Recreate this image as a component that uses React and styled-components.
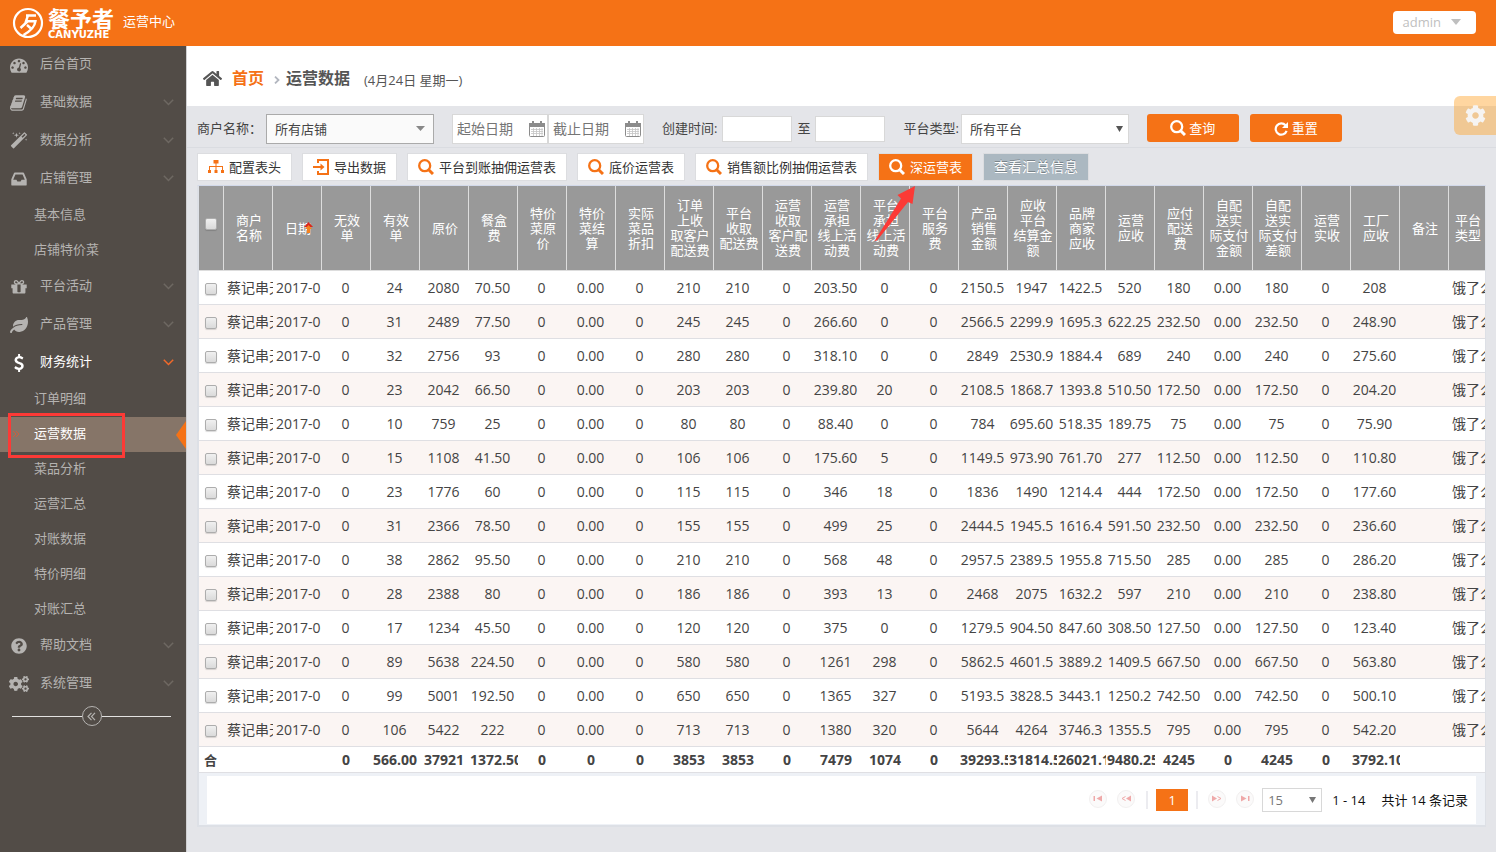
import React from "react";
import styled, { createGlobalStyle, css } from "styled-components";
import { FaLeaf, FaQuestionCircle, FaCogs, FaCog, FaHome } from "react-icons/fa";

const orange = "#f57216";

const GlobalStyle = createGlobalStyle`
  *, *::before, *::after { box-sizing: border-box; }
  body {
    margin: 0;
    background: #e4e5e9;
    color: #444;
    font-family: "Open Sans", "Noto Sans CJK SC", sans-serif;
    font-size: 13px;
    line-height: 20px;
  }
  button, input, select { font: inherit; color: inherit; margin: 0; }
  a { color: inherit; text-decoration: none; }
  ul, ol { list-style: none; margin: 0; padding: 0; }
`;

const Page = styled.div`
  min-height: 100vh;
  display: flex;
  flex-direction: column;
`;

const TopBar = styled.header`
  height: 46px;
  flex: none;
  display: flex;
  align-items: center;
  justify-content: space-between;
  padding: 0 20px 0 12px;
  background: ${orange};
  color: #fff;
`;

const Brand = styled.a`
  display: flex;
  align-items: center;
`;

const BrandWords = styled.span`
  display: flex;
  flex-direction: column;
  margin: 0 9px 0 4px;
`;

const BrandName = styled.strong`
  font-size: 22px;
  line-height: 24px;
  font-weight: 700;
`;

const BrandLatin = styled.small`
  font: 700 10px/10px "DejaVu Sans", sans-serif;
`;

const BrandSection = styled.span`
  padding-bottom: 4px;
`;

const UserButton = styled.button`
  display: flex;
  align-items: center;
  gap: 10px;
  height: 23px;
  margin-bottom: 2px;
  padding: 0 15px 0 10px;
  border: 0;
  border-radius: 4px;
  background: #fff;
  color: #bfbfbf;
`;

const Body = styled.div`
  flex: 1;
  display: flex;
`;

const Sidebar = styled.nav`
  flex: none;
  width: 187px;
  border-right: 1px solid #d0d0d2;
  background: #524c47;
  color: #b5b3b1;
`;

const MenuLink = styled.a`
  display: flex;
  align-items: center;
  height: 38px;
  padding: 0 12px 4px 9px;
  color: ${(p) => (p.$open ? "#fff" : "inherit")};
  > svg { margin-top: 3px; }
`;

const MenuIcon = styled.span`
  display: flex;
  justify-content: center;
  width: 20px;
  margin-right: 11px;
  padding-top: 4px;
`;

const MenuText = styled.span`
  flex: 1;
`;

const SubLink = styled.a`
  position: relative;
  display: flex;
  align-items: center;
  height: 35px;
  padding: 0 0 3px 34px;
  ${(p) =>
    p.$active &&
    css`
      background: #867568;
      color: #fff;
    `}
`;

const ActiveMark = styled.svg`
  position: absolute;
  left: 12px;
  top: 13px;
`;

const ActiveNotch = styled.svg`
  position: absolute;
  right: 0;
  top: 4px;
`;

const Highlight = styled.span`
  position: absolute;
  left: 8px;
  top: -4px;
  width: 117px;
  height: 45px;
  border: 3px solid #fc3a36;
  pointer-events: none;
`;

const CollapseRow = styled.div`
  display: flex;
  align-items: center;
  margin: 3px 15px 0 12px;
  &::before, &::after { content: ""; flex: 1; height: 1px; background: #e3e2e1; }
`;

const CollapseButton = styled.button`
  display: flex;
  align-items: center;
  justify-content: center;
  width: 20px;
  height: 20px;
  padding: 0;
  border: 1px solid #b5b3b1;
  border-radius: 50%;
  background: none;
`;

const Main = styled.main`
  flex: 1;
  min-width: 0;
`;

const Crumbs = styled.div`
  display: flex;
  align-items: center;
  height: 60px;
  padding: 4px 16px 0;
  background: #fff;
  color: #555;
`;

const CrumbLink = styled.a`
  margin-left: 10px;
  font-size: 16px;
  font-weight: 700;
  color: ${orange};
`;

const CrumbCurrent = styled.span`
  font-size: 16px;
  font-weight: 700;
`;

const CrumbSep = styled.svg`
  margin: 4px 6px 0 10px;
`;

const CrumbDate = styled.span`
  margin: 3px 0 0 14px;
`;

const Filters = styled.form`
  display: flex;
  flex-wrap: wrap;
  align-items: center;
  gap: 4px 18px;
  min-height: 42px;
  padding: 5px 10px 0;
  border-bottom: 1px solid #dadce1;
`;

const Field = styled.div`
  display: flex;
  align-items: center;
  gap: ${(p) => p.$gap || 0}px;
`;

const FieldLabel = styled.label`
  padding-bottom: 3px;
`;

const SelectBox = styled.span`
  position: relative;
  display: flex;
  width: ${(p) => p.$width}px;
  height: ${(p) => p.$height || 30}px;
  > svg { position: absolute; right: ${(p) => p.$inset || 6}px; top: 50%; margin-top: -3px; pointer-events: none; }
`;

const Select = styled.select`
  appearance: none;
  width: 100%;
  padding: 0 20px 0 ${(p) => p.$pad || 8}px;
  border: 1px solid ${(p) => (p.$strong ? "#aaa" : "#d8d8d8")};
  border-radius: 0;
  background: ${(p) => (p.$strong ? "#fafafa" : "#fff")};
  color: ${(p) => p.$color || "#444"};
`;

const DateBox = styled.label`
  display: flex;
  align-items: center;
  width: 96px;
  height: 30px;
  padding: 0 2px 0 4px;
  border: 1px solid #d8d8d8;
  background: #fff;
`;

const DateInput = styled.input`
  flex: 1;
  min-width: 0;
  padding: 0;
  border: 0;
  outline: 0;
  background: none;
  font-size: 14px;
  &::placeholder { color: #757575; }
`;

const TimeInput = styled.input`
  width: 70px;
  height: 26px;
  padding: 0 4px;
  border: 1px solid #d8d8d8;
  background: #fff;
`;

const ActionButton = styled.button`
  display: flex;
  align-items: center;
  justify-content: center;
  gap: 3px;
  width: 92px;
  height: 28px;
  margin-bottom: 2px;
  border: 0;
  border-radius: 3px;
  background: ${orange};
  color: #fff;
`;

const Toolbar = styled.div`
  display: flex;
  flex-wrap: wrap;
  gap: 4px 10px;
  padding: 5px 10px 4px;
`;

const ToolButton = styled.button`
  position: relative;
  display: flex;
  align-items: center;
  gap: 5px;
  height: 28px;
  padding: 0 10px;
  border: 1px solid #dcdde0;
  background: #fff;
  color: #333;
  > svg:first-child { color: ${orange}; }
  ${(p) =>
    p.$primary &&
    css`
      background: ${orange};
      color: #fff;
      > svg:first-child { color: #fff; }
    `}
  ${(p) =>
    p.$muted &&
    css`
      background: #abb8c1;
      color: #fff;
      font-size: 14px;
      text-shadow: 0 -1px 0 rgba(0, 0, 0, 0.3);
    `}
`;

const PointerArrow = styled.svg`
  position: absolute;
  left: -6px;
  top: 31px;
  z-index: 2;
  pointer-events: none;
`;

const Panel = styled.section`
  margin: 0 10px 25px;
  border: solid #dde0e6;
  border-width: 1px 1px 2px 2px;
  border-top-color: #d2d9ea;
  background: #eef1f6;
`;

const TableClip = styled.div`
  overflow: hidden;
`;

const Table = styled.table`
  width: 100%;
  table-layout: fixed;
  border-collapse: separate;
  border-spacing: 0;
  background: #fff;
`;

const CheckCol = styled.col`
  width: 25px;
`;

const DataCol = styled.col`
  width: 49px;
`;

const HeadCell = styled.th`
  position: relative;
  height: 85px;
  padding: 0 0 0 2px;
  border: solid #ddd;
  border-width: 0 1px 1px 0;
  background: #999;
  color: #fff;
  font-weight: 400;
  line-height: 15px;
  white-space: pre;
  &:first-child { padding: 0 0 10px; }
  &:last-child { border-right: 0; }
`;

const SortMark = styled.svg`
  position: absolute;
  right: 8px;
  top: 36px;
`;

const Row = styled.tr`
  background: #fff;
  &:nth-child(even) { background: #fbf5f3; }
`;

const Cell = styled.td`
  height: 34px;
  padding: 0 3px 0 1px;
  overflow: hidden;
  border-bottom: 1px solid #dfdfe3;
  font-size: 14px;
  text-align: center;
  white-space: nowrap;
`;

const TextCell = styled(Cell)`
  padding: 0 0 0 3px;
  text-align: left;
`;

const SumCell = styled(Cell)`
  height: 26px;
  padding: 0 2px 0 1px;
  font-weight: 700;
`;

const SumLabel = styled(SumCell)`
  padding: 0 2px 0 0;
  font-size: 13px;
`;

const Check = styled.input.attrs({ type: "checkbox" })`
  appearance: none;
  display: block;
  width: 12px;
  height: 12px;
  margin: 2px auto 0;
  border: 1px solid #adadad;
  border-radius: 2px;
  background: linear-gradient(#f0f0f0, #dadada);
  box-shadow: 0 1px 1px rgba(0, 0, 0, 0.15);
`;

const Pager = styled.div`
  display: flex;
  align-items: center;
  justify-content: flex-end;
  height: 48px;
  margin: 3px 9px 1px 8px;
  padding: 0 8px;
  background: #fff;
  color: #111;
`;

const PagerButton = styled.button`
  display: flex;
  align-items: center;
  justify-content: center;
  width: 18px;
  height: 18px;
  margin: 0 5px 2px;
  padding: 0 0 1px;
  border: 1px solid #f2f0f0;
  border-radius: 50%;
  background: #fbfafa;
`;

const PagerLine = styled.span`
  width: 2px;
  height: 18px;
  margin: ${(p) => (p.$after ? "0 5px 0 8px" : "0 8px 0 6px")};
  background: #ececf0;
`;

const PageNumber = styled.button`
  width: 32px;
  height: 22px;
  padding: 0;
  border: 0;
  background: ${orange};
  color: #fff;
`;

const PagerText = styled.span`
  margin-left: ${(p) => p.$gap}px;
`;

const PageSize = styled.span`
  display: flex;
  margin-left: 3px;
`;

const Settings = styled.button`
  position: fixed;
  right: 0;
  top: 96px;
  z-index: 3;
  display: flex;
  align-items: center;
  justify-content: center;
  width: 42px;
  height: 39px;
  padding: 0;
  border: 0;
  border-radius: 6px 0 0 6px;
  background: rgba(255, 165, 45, 0.45);
  color: #f6f4f2;
`;

const Fa4 = ({ d, size = 18 }) => (
  <svg width={size} height={size} viewBox="0 0 1792 1792" fill="currentColor" aria-hidden="true">
    <path d={d} />
  </svg>
);

const dashboardPath =
  "M384 1152q0-53-37.5-90.5t-90.5-37.5-90.5 37.5-37.5 90.5 37.5 90.5 90.5 37.5 90.5-37.5 37.5-90.5zm192-448q0-53-37.5-90.5t-90.5-37.5-90.5 37.5-37.5 90.5 37.5 90.5 90.5 37.5 90.5-37.5 37.5-90.5zm428 481l101-382q6-26-7.5-48.5t-38.5-29.5-48 6.5-30 39.5l-101 382q-60 5-107 43.5t-63 98.5q-20 77 20 146t117 89 146-20 89-117q16-60-6-117t-72-91zm660-33q0-53-37.5-90.5t-90.5-37.5-90.5 37.5-37.5 90.5 37.5 90.5 90.5 37.5 90.5-37.5 37.5-90.5zm-640-640q0-53-37.5-90.5t-90.5-37.5-90.5 37.5-37.5 90.5 37.5 90.5 90.5 37.5 90.5-37.5 37.5-90.5zm448 192q0-53-37.5-90.5t-90.5-37.5-90.5 37.5-37.5 90.5 37.5 90.5 90.5 37.5 90.5-37.5 37.5-90.5zm320 448q0 261-141 483-19 29-54 29h-1402q-35 0-54-29-141-221-141-483 0-182 71-348t191-286 286-191 348-71 348 71 286 191 191 286 71 348z";
const bookPath =
  "M1639 478q40 57 18 129l-275 906q-19 64-76.5 107.5t-122.5 43.5h-923q-77 0-148.5-53.5t-99.5-131.5q-24-67-2-127 0-4 3-27t4-37q1-8-3-21.5t-3-19.5q2-11 8-21t16.5-23.5 16.5-23.5q23-38 45-91.5t30-91.5q3-10 .5-30t-.5-28q3-11 17-28t17-23q21-36 42-92t25-90q1-9-2.5-32t.5-28q4-13 22-30.5t22-22.5q19-26 42.5-84.5t27.5-96.5q1-8-3-25.5t-2-26.5q2-8 9-18t18-23 17-21q8-12 16.5-30.5t15-35 16-36 19.5-32 26.5-23.5 36-11.5 47.5 5.5l-1 3q38-9 51-9h761q74 0 114 56t18 130l-274 906q-36 119-71.5 153.5t-128.5 34.5h-869q-27 0-38 15-11 16-1 43 24 70 144 70h923q29 0 56-15.5t35-41.5l300-987q7-22 5-57 38 15 59 43zm-1064 2q-4 13 2 22.5t20 9.5h608q13 0 25.5-9.5t16.5-22.5l21-64q4-13-2-22.5t-20-9.5h-608q-13 0-25.5 9.5t-16.5 22.5zm-83 256q-4 13 2 22.5t20 9.5h608q13 0 25.5-9.5t16.5-22.5l21-64q4-13-2-22.5t-20-9.5h-608q-13 0-25.5 9.5t-16.5 22.5z";
const magicPath =
  "M1254 581l293-293-107-107-293 293zm447-293q0 27-18 45l-1286 1286q-18 18-45 18t-45-18l-198-198q-18-18-18-45t18-45l1286-1286q18-18 45-18t45 18l198 198q18 18 18 45zm-1351-190l98 30-98 30-30 98-30-98-98-30 98-30 30-98zm350 162l196 60-196 60-60 196-60-196-196-60 196-60 60-196zm930 478l98 30-98 30-30 98-30-98-98-30 98-30 30-98zm-640-640l98 30-98 30-30 98-30-98-98-30 98-30 30-98z";
const inboxPath =
  "M1151 960h316q-1-3-2.5-8.5t-2.5-7.5l-212-496h-708l-212 496q-1 3-2.5 8.5t-2.5 7.5h316l95 192h320zm513 30v482q0 26-19 45t-45 19h-1408q-26 0-45-19t-19-45v-482q0-62 25-123l238-552q10-25 36.5-42t52.5-17h832q26 0 52.5 17t36.5 42l238 552q25 61 25 123z";
const giftPath =
  "M1056 1356v-716h-320v716q0 25 18 38.5t46 13.5h192q28 0 46-13.5t18-38.5zm-456-844h195l-126-161q-26-31-69-31-40 0-68 28t-28 68 28 68 68 28zm688-96q0-40-28-68t-68-28q-43 0-69 31l-125 161h194q40 0 68-28t28-68zm376 256v320q0 14-9 23t-23 9h-96v416q0 40-28 68t-68 28h-1088q-40 0-68-28t-28-68v-416h-96q-14 0-23-9t-9-23v-320q0-14 9-23t23-9h440q-93 0-158.5-65.5t-65.5-158.5 65.5-158.5 158.5-65.5q107 0 168 77l128 165 128-165q61-77 168-77 93 0 158.5 65.5t65.5 158.5-65.5 158.5-158.5 65.5h440q14 0 23 9t9 23z";
const dollarPath =
  "M1362 1185q0 153-99.5 263.5t-258.5 136.5v175q0 14-9 23t-23 9h-135q-13 0-22.5-9.5t-9.5-22.5v-175q-66-9-127.5-31t-101.5-44.5-74-48-46.5-37.5-17.5-18q-17-21-2-41l103-135q7-10 23-12 15-2 24 9l2 2q113 99 243 125 37 8 74 8 81 0 142.5-43t61.5-122q0-28-15-53t-33.5-42-58.5-37.5-66-32-80-32.5q-39-16-61.5-25t-61.5-26.5-62.5-31-56.5-35.5-53.5-42.5-43.5-49-35.5-58-21-66.5-8.5-78q0-138 98-242t255-134v-180q0-13 9.5-22.5t22.5-9.5h135q14 0 23 9t9 23v176q57 6 110.5 23t87 33.5 63.5 37.5 39 29 15 14q17 18 5 38l-81 146q-8 15-23 16-14 3-27-7-3-3-14.5-12t-39-26.5-58.5-32-74.5-26-85.5-11.5q-95 0-155 43t-60 111q0 26 8.5 48t29.5 41.5 39.5 33 56 31 60.5 27 70 27.5q53 20 81 31.5t76 35 75.5 42.5 62 50 53 63.5 31.5 76.5 13 94z";

const LogoMark = () => (
  <svg width="32" height="32" viewBox="0 0 32 32" fill="none" stroke="#fff" aria-hidden="true">
    <circle cx="16" cy="16" r="14" strokeWidth="2.2" />
    <path d="M14 8.500H24M16 8.500L14 14.200H23.500Q22.500 22 11.500 28M15.500 14.500L8.500 21M15 18l4.500 4" strokeWidth="2.400" />
  </svg>
);

const Chevron = ({ color = "#6e6862" }) => (
  <svg width="11" height="7" viewBox="0 0 11 7" fill="none" stroke={color} strokeWidth="1.5" aria-hidden="true">
    <path d="M.8.8l4.700 4.700L10.200.8" />
  </svg>
);

const Caret = ({ w = 9, h = 5, color = "#888" }) => (
  <svg width={w} height={h} viewBox="0 0 10 6" preserveAspectRatio="none" fill={color} aria-hidden="true">
    <path d="M0 0h10L5 6z" />
  </svg>
);

const SearchIcon = () => (
  <svg width="16" height="16" viewBox="0 0 16 16" fill="none" stroke="currentColor" aria-hidden="true">
    <circle cx="6.700" cy="6.700" r="5.500" strokeWidth="2.300" />
    <path d="M10.700 10.700L15 15" strokeWidth="3" />
  </svg>
);

const SitemapIcon = () => (
  <svg width="16" height="16" viewBox="0 0 16 16" fill="currentColor" aria-hidden="true">
    <path d="M5.500 1h5v3.500H8.500V7H15v4h1v3h-3v-3h1V8H8.500v3h1v3h-3v-3h1V8H2v3h1v3H0v-3h1V7h6.500V4.500h-2z" />
  </svg>
);

const ExportIcon = () => (
  <svg width="16" height="16" viewBox="0 0 16 16" fill="none" stroke="currentColor" strokeWidth="2" aria-hidden="true">
    <path d="M5 4V1h10v14H5v-3M0 8h9" />
    <path d="M7.500 4.500L11.500 8l-4 3.500z" fill="currentColor" stroke="none" />
  </svg>
);

const RepeatIcon = () => (
  <svg width="15" height="15" viewBox="0 0 15 15" fill="none" stroke="currentColor" strokeWidth="2.200" aria-hidden="true">
    <path d="M11.500 4.300A5.600 5.600 0 1 0 12.600 9.800" />
    <path d="M14 1V7H8z" fill="currentColor" stroke="none" />
  </svg>
);

const CalendarIcon = () => (
  <svg width="16" height="16" viewBox="0 0 16 16" aria-hidden="true">
    <rect x=".5" y="2.500" width="15" height="13" rx="1" fill="#fff" stroke="#8c8c8c" />
    <path d="M0 2h16v4H0zM3 0h2v3H3zM11 0h2v3h-2z" fill="#8c8c8c" />
    <path d="M2 8.500h12M2 10.500h12M2 12.500h12M4.500 7v8M7.500 7v8M10.500 7v8M13 7v8" stroke="#c4c4c4" strokeWidth=".8" />
  </svg>
);

const pagerShapes = {
  first: <path d="M.5 2h1.500v5H.5zM9 1.500v6L3.500 4.500z" />,
  prev: (
    <>
      <path d="M10 1.500v6L5 4.500z" />
      <path d="M4.500 2.500L1 4.500l3.500 2" fill="none" stroke="#efa9a9" />
    </>
  ),
  next: (
    <>
      <path d="M0 1.500v6l5-3z" />
      <path d="M5.500 2.500L9 4.500l-3.500 2" fill="none" stroke="#efa9a9" />
    </>
  ),
  last: <path d="M8 2h1.500v5H8zM1 1.500v6l5.500-3z" />,
};

const PagerIcon = ({ kind }) => (
  <svg width="10" height="9" viewBox="0 0 10 9" fill="#efa9a9" aria-hidden="true">
    {pagerShapes[kind]}
  </svg>
);

const menu = [
  { label: "后台首页", icon: <Fa4 d={dashboardPath} />, leaf: true },
  { label: "基础数据", icon: <Fa4 d={bookPath} /> },
  { label: "数据分析", icon: <Fa4 d={magicPath} /> },
  { label: "店铺管理", icon: <Fa4 d={inboxPath} />, items: ["基本信息", "店铺特价菜"] },
  { label: "平台活动", icon: <Fa4 d={giftPath} /> },
  { label: "产品管理", icon: <FaLeaf size={18} /> },
  {
    label: "财务统计",
    icon: <Fa4 d={dollarPath} />,
    open: true,
    items: ["订单明细", "运营数据", "菜品分析", "运营汇总", "对账数据", "特价明细", "对账汇总"],
  },
  { label: "帮助文档", icon: <FaQuestionCircle size={16} /> },
  { label: "系统管理", icon: <FaCogs size={20} /> },
];

const columns = [
  "商户\n名称", "日期", "无效\n单", "有效\n单", "原价", "餐盒\n费", "特价\n菜原\n价", "特价\n菜结\n算",
  "实际\n菜品\n折扣", "订单\n上收\n取客户\n配送费", "平台\n收取\n配送费", "运营\n收取\n客户配\n送费",
  "运营\n承担\n线上活\n动费", "平台\n承担\n线上活\n动费", "平台\n服务\n费", "产品\n销售\n金额",
  "应收\n平台\n结算金\n额", "品牌\n商家\n应收", "运营\n应收", "应付\n配送\n费", "自配\n送实\n际支付\n金额",
  "自配\n送实\n际支付\n差额", "运营\n实收", "工厂\n应收", "备注", "平台\n类型",
];

const rows = [
  "0 24 2080 70.50 0 0.00 0 210 210 0 203.50 0 0 2150.5 1947 1422.5 520 180 0.00 180 0 208",
  "0 31 2489 77.50 0 0.00 0 245 245 0 266.60 0 0 2566.5 2299.9 1695.3 622.25 232.50 0.00 232.50 0 248.90",
  "0 32 2756 93 0 0.00 0 280 280 0 318.10 0 0 2849 2530.9 1884.4 689 240 0.00 240 0 275.60",
  "0 23 2042 66.50 0 0.00 0 203 203 0 239.80 20 0 2108.5 1868.7 1393.8 510.50 172.50 0.00 172.50 0 204.20",
  "0 10 759 25 0 0.00 0 80 80 0 88.40 0 0 784 695.60 518.35 189.75 75 0.00 75 0 75.90",
  "0 15 1108 41.50 0 0.00 0 106 106 0 175.60 5 0 1149.5 973.90 761.70 277 112.50 0.00 112.50 0 110.80",
  "0 23 1776 60 0 0.00 0 115 115 0 346 18 0 1836 1490 1214.4 444 172.50 0.00 172.50 0 177.60",
  "0 31 2366 78.50 0 0.00 0 155 155 0 499 25 0 2444.5 1945.5 1616.4 591.50 232.50 0.00 232.50 0 236.60",
  "0 38 2862 95.50 0 0.00 0 210 210 0 568 48 0 2957.5 2389.5 1955.8 715.50 285 0.00 285 0 286.20",
  "0 28 2388 80 0 0.00 0 186 186 0 393 13 0 2468 2075 1632.2 597 210 0.00 210 0 238.80",
  "0 17 1234 45.50 0 0.00 0 120 120 0 375 0 0 1279.5 904.50 847.60 308.50 127.50 0.00 127.50 0 123.40",
  "0 89 5638 224.50 0 0.00 0 580 580 0 1261 298 0 5862.5 4601.5 3889.2 1409.5 667.50 0.00 667.50 0 563.80",
  "0 99 5001 192.50 0 0.00 0 650 650 0 1365 327 0 5193.5 3828.5 3443.1 1250.2 742.50 0.00 742.50 0 500.10",
  "0 106 5422 222 0 0.00 0 713 713 0 1380 320 0 5644 4264 3746.3 1355.5 795 0.00 795 0 542.20",
].map((line) => line.split(" "));

const totals =
  "0 566.00 37921 1372.50 0 0 0 3853 3853 0 7479 1074 0 39293.5 31814.5 26021.1 9480.25 4245 0 4245 0 3792.10".split(" ");

function Menu() {
  return (
    <Sidebar aria-label="主菜单">
      <ul>
        {menu.map((m) => (
          <li key={m.label}>
            <MenuLink href="#" $open={m.open}>
              <MenuIcon>{m.icon}</MenuIcon>
              <MenuText>{m.label}</MenuText>
              {!m.leaf && <Chevron color={m.open ? "#f2692a" : undefined} />}
            </MenuLink>
            {m.items && (
              <ul>
                {m.items.map((s) => {
                  const active = s === "运营数据";
                  return (
                    <li key={s}>
                      <SubLink href="#" $active={active}>
                        {s}
                        {active && (
                          <>
                            <ActiveMark width="8" height="8" viewBox="0 0 8 8" fill="none" stroke="#c9603f">
                              <path d="M1 1l3 3-3 3M4 1l3 3-3 3" />
                            </ActiveMark>
                            <ActiveNotch width="10" height="28" viewBox="0 0 10 28" fill={orange}>
                              <path d="M10 0v28L0 14z" />
                            </ActiveNotch>
                            <Highlight />
                          </>
                        )}
                      </SubLink>
                    </li>
                  );
                })}
              </ul>
            )}
          </li>
        ))}
      </ul>
      <CollapseRow>
        <CollapseButton type="button" aria-label="收起菜单">
          <svg width="9" height="9" viewBox="0 0 9 9" fill="none" stroke="#b5b3b1" strokeWidth="1.200">
            <path d="M4.500 .8L1 4.500l3.500 3.700M8 .8L4.500 4.500 8 8.200" />
          </svg>
        </CollapseButton>
      </CollapseRow>
    </Sidebar>
  );
}

function FilterBar() {
  return (
    <Filters onSubmit={(e) => e.preventDefault()}>
      <Field $gap={4}>
        <FieldLabel htmlFor="shop">商户名称：</FieldLabel>
        <SelectBox $width={168} $inset={9}>
          <Select id="shop" $strong>
            <option>所有店铺</option>
          </Select>
          <Caret />
        </SelectBox>
      </Field>
      <Field>
        <DateBox>
          <DateInput placeholder="起始日期" aria-label="起始日期" />
          <CalendarIcon />
        </DateBox>
        <DateBox>
          <DateInput placeholder="截止日期" aria-label="截止日期" />
          <CalendarIcon />
        </DateBox>
      </Field>
      <Field $gap={5}>
        <FieldLabel htmlFor="from">创建时间:</FieldLabel>
        <TimeInput id="from" />
        <FieldLabel htmlFor="to">至</FieldLabel>
        <TimeInput id="to" />
      </Field>
      <Field $gap={2}>
        <FieldLabel htmlFor="platform">平台类型:</FieldLabel>
        <SelectBox $width={168}>
          <Select id="platform">
            <option>所有平台</option>
          </Select>
          <Caret w={7} h={6} color="#555" />
        </SelectBox>
      </Field>
      <Field $gap={11}>
        <ActionButton type="submit">
          <SearchIcon />
          查询
        </ActionButton>
        <ActionButton type="reset">
          <RepeatIcon />
          重置
        </ActionButton>
      </Field>
    </Filters>
  );
}

function DataTable() {
  return (
    <TableClip>
      <Table>
        <colgroup>
          <CheckCol />
          {columns.slice(0, -1).map((c) => (
            <DataCol key={c} />
          ))}
          <col />
        </colgroup>
        <thead>
          <tr>
            <HeadCell>
              <Check aria-label="全选" />
            </HeadCell>
            {columns.map((c) => (
              <HeadCell key={c} scope="col">
                {c}
                {c === "日期" && (
                  <SortMark width="9" height="11" viewBox="0 0 9 11">
                    <path d="M4.500 0L9 5H0z" fill="#d9261c" />
                    <path d="M4.500 3L8 7H6v4H3V7H1z" fill="#f58220" />
                  </SortMark>
                )}
              </HeadCell>
            ))}
          </tr>
        </thead>
        <tbody>
          {rows.map((r, i) => (
            <Row key={i}>
              <Cell>
                <Check aria-label="选择此行" />
              </Cell>
              <TextCell>蔡记串天</TextCell>
              <TextCell>2017-0</TextCell>
              {r.map((v, j) => (
                <Cell key={j}>{v}</Cell>
              ))}
              <Cell />
              <TextCell>饿了么</TextCell>
            </Row>
          ))}
        </tbody>
        <tfoot>
          <tr>
            <SumLabel>合</SumLabel>
            <SumCell />
            <SumCell />
            {totals.map((v, j) => (
              <SumCell key={j}>{v}</SumCell>
            ))}
            <SumCell />
            <SumCell />
          </tr>
        </tfoot>
      </Table>
    </TableClip>
  );
}

function PagerBar() {
  return (
    <Pager>
      <PagerButton type="button" aria-label="首页"><PagerIcon kind="first" /></PagerButton>
      <PagerButton type="button" aria-label="上一页"><PagerIcon kind="prev" /></PagerButton>
      <PagerLine />
      <PageNumber type="button">1</PageNumber>
      <PagerLine $after />
      <PagerButton type="button" aria-label="下一页"><PagerIcon kind="next" /></PagerButton>
      <PagerButton type="button" aria-label="末页"><PagerIcon kind="last" /></PagerButton>
      <PageSize>
        <SelectBox $width={60} $height={24}>
          <Select aria-label="每页条数" $pad={5} $color="#777">
            <option>15</option>
          </Select>
          <Caret w={7} h={6} color="#777" />
        </SelectBox>
      </PageSize>
      <PagerText $gap={10}>1 - 14</PagerText>
      <PagerText $gap={16}>共计 14 条记录</PagerText>
    </Pager>
  );
}

export default function App() {
  return (
    <Page>
      <GlobalStyle />
      <TopBar>
        <Brand href="#">
          <LogoMark />
          <BrandWords>
            <BrandName>餐予者</BrandName>
            <BrandLatin>CANYUZHE</BrandLatin>
          </BrandWords>
          <BrandSection>运营中心</BrandSection>
        </Brand>
        <UserButton type="button">
          admin
          <Caret w={10} h={6} color="#bfbfbf" />
        </UserButton>
      </TopBar>
      <Body>
        <Menu />
        <Main>
          <Crumbs>
            <FaHome size={19} />
            <CrumbLink href="#">首页</CrumbLink>
            <CrumbSep width="6" height="8" viewBox="0 0 6 8" fill="none" stroke="#b2b6bf" strokeWidth="1.800">
              <path d="M1 .6L4.500 4 1 7.400" />
            </CrumbSep>
            <CrumbCurrent>运营数据</CrumbCurrent>
            <CrumbDate>(4月24日 星期一)</CrumbDate>
          </Crumbs>
          <FilterBar />
          <Toolbar>
            <ToolButton type="button"><SitemapIcon />配置表头</ToolButton>
            <ToolButton type="button"><ExportIcon />导出数据</ToolButton>
            <ToolButton type="button"><SearchIcon />平台到账抽佣运营表</ToolButton>
            <ToolButton type="button"><SearchIcon />底价运营表</ToolButton>
            <ToolButton type="button"><SearchIcon />销售额比例抽佣运营表</ToolButton>
            <ToolButton type="button" $primary>
              <SearchIcon />
              深运营表
              <PointerArrow width="44" height="57" viewBox="0 0 44 57" fill="#fc3a36">
                <path d="M1.500 56L28 13.500 24.500 10 42 1l-2.500 18-4.500-2L4 55.500z" />
              </PointerArrow>
            </ToolButton>
            <ToolButton type="button" $muted>查看汇总信息</ToolButton>
          </Toolbar>
          <Panel>
            <DataTable />
            <PagerBar />
          </Panel>
        </Main>
      </Body>
      <Settings type="button" aria-label="设置">
        <FaCog size={21} />
      </Settings>
    </Page>
  );
}
